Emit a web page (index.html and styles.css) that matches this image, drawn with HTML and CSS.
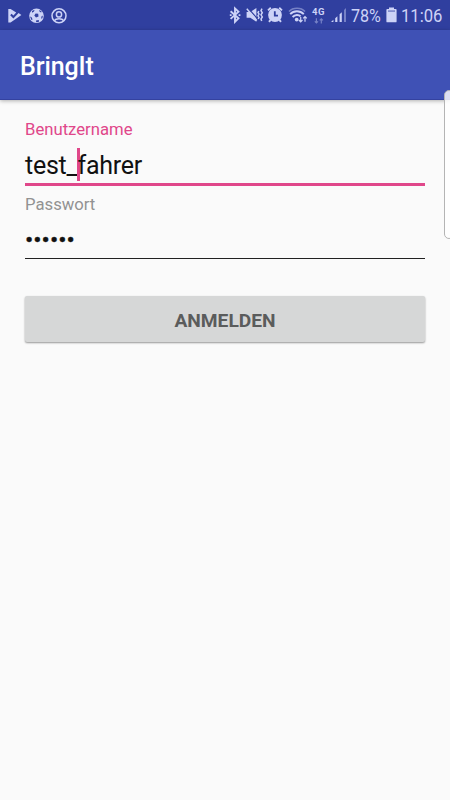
FILE: index.html
```
<!DOCTYPE html>
<html lang="de">

<head>
    <meta charset="UTF-8">
    <meta name="viewport" content="width=device-width, initial-scale=1.0">
    <title>BringIt</title>
    <link rel="stylesheet" href="styles.css">
</head>

<body>

    <div class="statusbar">
        <div class="notifications">
            <!-- play store update -->
            <svg width="14" height="16" viewBox="0 0 14 16">
                <path class="fill" d="M0.3 1 H2.6 L8.2 4.4 L5.4 7.6 L3.6 5.8 L2.2 7.2 L5.4 10.4 L10.6 5 L13.4 7 L2.6 14.4 H0.3 Z" />
            </svg>
            <!-- football -->
            <svg width="15" height="16" viewBox="0 0 15 16">
                <circle class="fill" cx="7.5" cy="7.8" r="7.3" />
                <path class="hole" d="M6.6 5.4 L9.2 5.8 L9.5 8.5 L7 9.5 L5.3 7.4 Z M3 3 L5.6 1.8 L5 3.6 L3 4.8 Z M10.4 2 L12.8 3.8 L12 4.4 L10.2 3.2 Z M1 8.4 L2.6 9.2 L3.6 11.6 L2.4 12 Z M7 12.4 L9.8 12 L10 13.8 L7.2 14.2 Z M12.4 8.6 L13.9 7.6 L13.4 10.2 L12.2 10.8 Z" />
            </svg>
            <!-- account -->
            <svg width="16" height="16" viewBox="0 0 16 16">
                <circle class="line" cx="8" cy="7.8" r="7" />
                <circle class="line" cx="8" cy="6.4" r="2.6" />
                <path class="line" d="M3.2 12.7 C5 10.1 11 10.1 12.8 12.7" />
            </svg>
        </div>
        <div class="system">
            <!-- bluetooth -->
            <svg class="bluetooth" width="12" height="18" viewBox="0 0 12 18">
                <path class="line bold" d="M1.6 5.3 L9.5 12.4 L6 15.8 V2.4 L9.5 5.8 L1.6 12.9" />
                <path class="fill" d="M0.8 8.2 h1.8 v1.8 h-1.8 Z M9.6 8.2 h1.8 v1.8 h-1.8 Z" />
            </svg>
            <!-- vibrate / mute -->
            <svg class="mute" width="18" height="18" viewBox="0 0 18 18">
                <path class="fill" d="M0.6 6 H4.3 L10.4 2 V15.8 L4.3 11.8 H0.6 Z" />
                <path class="cut thin" d="M2 2 L11.6 13" />
                <path class="line" d="M0.8 2.8 L10.8 14.6" />
                <path class="line" d="M12.8 5 l-0.8 1.4 1 1.7 -1 1.7 1 1.7 -0.8 1.5 M16 2.6 l-1 2 1.3 2.1 -1.3 2.1 1.3 2.1 -1.3 2.1 0.7 2" />
            </svg>
            <!-- alarm -->
            <svg class="alarm" width="16" height="18" viewBox="0 0 16 18">
                <circle class="fill" cx="8" cy="9" r="6.9" />
                <path class="line bold" d="M1 4.4 L3.8 1.8 M12.2 1.8 L15 4.4 M3.6 13.8 L2 15.8 M12.4 13.8 L14 15.8" />
                <path class="cut" d="M7.8 5.2 V9.6 H11" />
            </svg>
            <!-- wifi -->
            <svg class="wifi" width="20" height="18" viewBox="0 0 20 18">
                <path class="line faded" d="M1 5.4 C5 1.2 13 1.2 17 5.4" />
                <path class="line bold" d="M2.2 8.2 C5.8 4.3 12 4.3 15.8 8.2 M4.6 11 C7 8.4 10.7 8.4 12.6 10.4" />
                <circle class="fill" cx="8.7" cy="13.6" r="1.9" />
                <path class="line thin" d="M12.7 11 V15.8 M10.9 14 L12.7 15.8 L14.5 14 M17 15.8 V10.6 M15.2 12.4 L17 10.6 L18.8 12.4" />
            </svg>
            <div class="network">
                <span>4G</span>
                <svg width="10" height="6" viewBox="0 0 10 6">
                    <path class="line thin faded" d="M2.4 0.2 V5 M0.8 3.4 L2.4 5 L4 3.4 M7.3 5.5 V0.8 M5.7 2.4 L7.3 0.8 L8.9 2.4" />
                </svg>
            </div>
            <!-- signal -->
            <svg class="signal" width="16" height="18" viewBox="0 0 16 18">
                <path class="fill" d="M0 16 L2.4 13.8 V16 Z M4.2 12.2 L6.4 10.2 V16 H4.2 Z M8.6 8.2 L10.8 6.2 V16 H8.6 Z" />
                <path class="fill faded" d="M13 4 L15 2 V16 H13 Z" />
            </svg>
            <span class="percent">78%</span>
            <!-- battery -->
            <svg class="battery" width="11" height="18" viewBox="0 0 11 18">
                <path class="fill" d="M3 1.5 h5 v1.4 h1.7 a0.9 0.9 0 0 1 0.9 0.9 v11.6 a0.9 0.9 0 0 1 -0.9 0.9 h-8.4 a0.9 0.9 0 0 1 -0.9 -0.9 v-11.6 a0.9 0.9 0 0 1 0.9 -0.9 h1.7 Z" />
                <path class="hole faded" d="M2 4.2 h7 v1.8 h-7 Z" />
            </svg>
            <span class="clock">11:06</span>
        </div>
    </div>

    <header class="toolbar">
        <h1>BringIt</h1>
    </header>

    <!-- edge panel handle -->
    <div class="edge-handle"></div>

    <main class="login">
        <div class="field active">
            <div class="label">Benutzername</div>
            <div class="value"><span>test_</span><span class="caret"></span><span>fahrer</span></div>
        </div>
        <div class="field">
            <div class="label">Passwort</div>
            <div class="value password">••••••</div>
        </div>
        <button class="submit" type="button">ANMELDEN</button>
    </main>

</body>
</html>
```

FILE: styles.css
```
* {
    box-sizing: border-box;
}

body {
    font-family: Roboto, sans-serif;
    background-color: #fafafa;
    margin: 0;
    height: 100vh;
    position: relative;
    overflow: hidden;
}

svg {
    display: block;
    flex: none;
}

.statusbar {
    height: 30px;
    background-color: #303f9f;
    color: #cdd3f7;
    display: flex;
    justify-content: space-between;
    align-items: center;
    padding: 0 7px 0 8px;
}

.notifications, .system {
    display: flex;
    align-items: center;
}

.notifications {
    gap: 7px;
    padding-top: 1px;
}

.fill {
    fill: #cdd3f7;
}

.hole {
    fill: #303f9f;
}

.line {
    fill: none;
    stroke: #cdd3f7;
    stroke-width: 1.5;
}

.cut {
    fill: none;
    stroke: #303f9f;
    stroke-width: 1.8;
}

.thin {
    stroke-width: 1.2;
}

.bold {
    stroke-width: 1.9;
}

.faded {
    opacity: 0.45;
}

.bluetooth {
    margin-right: 5px;
}

.mute {
    margin-right: 3px;
}

.alarm {
    margin-right: 5px;
}

.wifi {
    margin-right: 4px;
}

.network {
    width: 15px;
    margin-right: 4px;
    font-size: 9.5px;
    font-weight: 700;
    line-height: 10px;
    letter-spacing: 0.5px;
}

.network svg {
    margin: 1px 0 0 2px;
}

.signal {
    margin-right: 4px;
}

.percent, .clock {
    font-size: 18.5px;
    line-height: 30px;
    padding-top: 2px;
    white-space: nowrap;
}

.percent {
    width: 30px;
    margin-right: 5px;
    transform: scaleX(0.87);
    transform-origin: left;
}

.clock {
    width: 42px;
    margin-left: 4px;
    transform: scaleX(0.9);
    transform-origin: left;
}

.toolbar {
    height: 70px;
    background-color: #3f51b5;
    border-bottom: 1px solid #3442a0;
    box-shadow: 0 1px 4px rgba(0, 0, 0, 0.3);
    padding-left: 20px;
    display: flex;
    align-items: center;
}

h1 {
    color: #fff;
    font-size: 25px;
    font-weight: 500;
    letter-spacing: -0.1px;
    line-height: 30px;
    margin: 5px 0 0;
}

.edge-handle {
    position: absolute;
    top: 90px;
    right: -4px;
    width: 10px;
    height: 149px;
    border: 1px solid #b4b4b4;
    border-radius: 7px;
    background-color: rgba(255, 255, 255, 0.82);
}

.login {
    padding: 20px 25px;
}

.field {
    height: 65px;
    border-bottom: 1px solid #212121;
}

.label {
    color: #929292;
    font-size: 16.7px;
    line-height: 20px;
    padding-top: 1px;
}

.value {
    display: flex;
    align-items: center;
    height: 33px;
    margin-top: 7px;
    color: #111;
    font-size: 25px;
    letter-spacing: -0.25px;
}

.value span:not(.caret) {
    padding-top: 2px;
}

.active {
    height: 66px;
    border-bottom: 3px solid #e0478a;
    margin-bottom: 8px;
}

.active .label {
    color: #e0478a;
    padding-top: 0;
}

.active .value {
    margin-top: 8px;
}

.caret {
    width: 3px;
    height: 33px;
    margin-left: -1px;
    margin-right: -2px;
    background-color: #e0478a;
}

.password {
    padding-top: 2px;
    font-size: 24.6px;
    letter-spacing: 0;
    -webkit-text-stroke: 0.4px #111;
}

.submit {
    display: block;
    width: 100%;
    height: 46px;
    margin-top: 37px;
    padding: 2px 0 0;
    border: none;
    border-radius: 2px;
    background-color: #d6d7d7;
    box-shadow: 0 1px 2px rgba(0, 0, 0, 0.4);
    color: #5b5c5c;
    font-family: Roboto, sans-serif;
    font-size: 19.2px;
    font-weight: 700;
}
```
